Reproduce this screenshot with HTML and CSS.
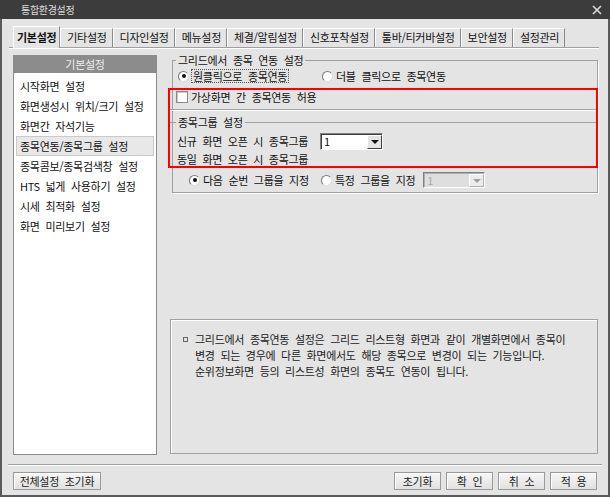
FILE: index.html
```html
<!DOCTYPE html>
<html lang="ko">
  <head>
    <meta charset="UTF-8" />
    <title>통합환경설정</title>
    <link rel="stylesheet" href="styles.css">
  </head>
  <body>
    <div class="window">
      <div class="titlebar">
        <span class="title">통합환경설정</span>
        <svg class="close" width="10" height="10" viewBox="0 0 10 10">
          <path d="M1 1 L9 9 M9 1 L1 9" stroke="#dcdcdc" stroke-width="1.6" />
        </svg>
      </div>

      <div class="tabs">
        <span class="tab active">기본설정</span>
        <span class="tab">기타설정</span>
        <span class="tab">디자인설정</span>
        <span class="tab">메뉴설정</span>
        <span class="tab">체결/알림설정</span>
        <span class="tab">신호포착설정</span>
        <span class="tab">툴바/티커바설정</span>
        <span class="tab">보안설정</span>
        <span class="tab">설정관리</span>
      </div>

      <div class="content">
        <div class="sidebar">
          <div class="side-head">기본설정</div>
          <ul class="side-list">
            <li>시작화면 설정</li>
            <li>화면생성시 위치/크기 설정</li>
            <li>화면간 자석기능</li>
            <li class="selected">종목연동/종목그룹 설정</li>
            <li>종목콤보/종목검색창 설정</li>
            <li>HTS 넓게 사용하기 설정</li>
            <li>시세 최적화 설정</li>
            <li>화면 미리보기 설정</li>
          </ul>
        </div>

        <div class="main">
          <fieldset class="group">
            <legend>그리드에서 종목 연동 설정</legend>
            <div class="row first-row">
              <label class="opt wide">
                <span class="radio checked"></span>
                <span class="focus">원클릭으로 종목연동</span>
              </label>
              <label class="opt">
                <span class="radio"></span>
                <span>더블 클릭으로 종목연동</span>
              </label>
            </div>

            <div class="highlight">
              <label class="row check-row">
                <span class="checkbox"></span>
                <span>가상화면 간 종목연동 허용</span>
              </label>
              <div class="divider"></div>
              <fieldset class="subgroup">
                <legend>종목그룹 설정</legend>
                <div class="field-row">
                  <span class="field-label">신규 화면 오픈 시 종목그룹</span>
                  <span class="combo">
                    <span class="combo-value">1</span>
                    <span class="combo-btn"></span>
                  </span>
                </div>
                <div class="field-row second">
                  <span class="field-label">동일 화면 오픈 시 종목그룹</span>
                </div>
              </fieldset>
            </div>

            <div class="row group-row">
              <label class="opt narrow">
                <span class="radio checked"></span>
                <span>다음 순번 그룹을 지정</span>
              </label>
              <label class="opt">
                <span class="radio"></span>
                <span>특정 그룹을 지정</span>
              </label>
              <span class="combo disabled">
                <span class="combo-value">1</span>
                <span class="combo-btn"></span>
              </span>
            </div>
          </fieldset>

          <div class="info">
            <span class="bullet"></span>
            <p>그리드에서 종목연동 설정은 그리드 리스트형 화면과 같이 개별화면에서 종목이<br>
              변경 되는 경우에 다른 화면에서도 해당 종목으로 변경이 되는 기능입니다.<br>
              순위정보화면 등의 리스트성 화면의 종목도 연동이 됩니다.</p>
          </div>
        </div>
      </div>

      <div class="footer-line"></div>
      <div class="buttons">
        <button class="btn reset-all">전체설정 초기화</button>
        <div class="btn-group">
          <button class="btn">초기화</button>
          <button class="btn">확 인</button>
          <button class="btn">취 소</button>
          <button class="btn">적 용</button>
        </div>
      </div>
    </div>
  </body>
</html>
```

FILE: styles.css
```css
* {
  box-sizing: border-box;
}
body {
  margin: 0;
  font-family: "Noto Sans CJK KR", "Liberation Sans", sans-serif;
  font-size: 11px;
  letter-spacing: -0.3px;
  word-spacing: 3px;
  color: #111;
}
.window {
  width: 610px;
  height: 497px;
  background: #e4e4e4;
  border: 2px solid #5a5a5a;
  border-top: none;
  display: flex;
  flex-direction: column;
}

/* title bar */
.titlebar {
  height: 19px;
  margin: 0 -2px;
  padding: 0 8px 0 21px;
  background: #3c3c3c;
  color: #dcdcdc;
  font-size: 10px;
  display: flex;
  align-items: center;
  justify-content: space-between;
}
.close {
  display: block;
}

/* tabs */
.tabs {
  display: flex;
  align-items: flex-end;
  height: 22px;
  margin: 7px 9px 0 7px;
  padding-left: 4px;
  border-bottom: 1px solid #a0a0a0;
  box-shadow: 0 1px 0 #fff;
}
.tab {
  height: 19px;
  padding: 0 5px 0 6px;
  line-height: 17px;
  border-top: 1px solid #fff;
  border-left: 1px solid #fff;
  border-right: 1px solid #8a8a8a;
  white-space: nowrap;
}
.tab.active {
  height: 22px;
  margin-bottom: -1px;
  padding: 0 3px;
  line-height: 20px;
  font-weight: bold;
  background: #e4e4e4;
  position: relative;
}

/* body */
.content {
  display: flex;
  gap: 13px;
  height: 402px;
  margin-top: 5px;
  padding: 0 10px 0 11px;
}
.sidebar {
  width: 144px;
  margin-top: 2px;
  background: #fff;
  border: 1px solid #8c8c8c;
}
.side-head {
  height: 17px;
  line-height: 17px;
  background: #8c8c8c;
  color: #eee;
  text-align: center;
}
.side-list {
  list-style: none;
  margin: 0;
  padding: 3px 0 0;
}
.side-list li {
  height: 20px;
  line-height: 20px;
  padding-left: 6px;
  white-space: nowrap;
}
.side-list li.selected {
  margin: 0 2px;
  padding-left: 3px;
  background: #e8e8e8;
  border: 1px solid #cacaca;
  line-height: 18px;
}

.main {
  flex: 1;
  display: flex;
  flex-direction: column;
}
.group {
  margin: 0 0 0 2px;
  padding: 1px 0 4px 0;
  min-width: 0;
  border: 1px solid #a0a0a0;
  box-shadow: 1px 1px 0 #fff;
}
.group > legend {
  margin-left: 3px;
  padding: 0 2px;
  line-height: 14px;
}
.row {
  display: flex;
  align-items: center;
  height: 16px;
}
.first-row {
  padding-left: 5px;
}
.opt {
  display: flex;
  flex: none;
  align-items: center;
  gap: 3px;
  white-space: nowrap;
}
.opt.wide {
  width: 144px;
}
.opt.narrow {
  width: 132px;
}
.focus {
  outline: 1px dotted #555;
  outline-offset: 0;
  padding: 0 1px;
  line-height: 12px;
}
.radio {
  flex: none;
  width: 11px;
  height: 11px;
  border-radius: 50%;
  background: #fff;
  border: 1px solid;
  border-color: #7a7a7a #dcdcdc #dcdcdc #7a7a7a;
  display: flex;
  align-items: center;
  justify-content: center;
}
.radio.checked::after {
  content: "";
  width: 4px;
  height: 4px;
  border-radius: 50%;
  background: #111;
}
.checkbox {
  width: 12px;
  height: 12px;
  background: #fff;
  border: 1px solid #8a8a8a;
  box-shadow: inset 1px 1px 0 #c8c8c8;
}

/* red annotation */
.highlight {
  margin: 4px -1px 0 -5px;
  border: 2px solid #ff0000;
}
.check-row {
  height: 14px;
  padding-left: 6px;
  gap: 3px;
}
.divider {
  height: 2px;
  margin-top: 5px;
  border-top: 1px solid #a0a0a0;
  border-bottom: 1px solid #fff;
}
.subgroup {
  margin: 4px 0 0;
  padding: 0;
  min-width: 0;
  border: none;
  border-top: 1px solid #a0a0a0;
}
.subgroup > legend {
  margin-left: 6px;
  padding: 0 2px;
  line-height: 14px;
}
.field-row {
  display: flex;
  align-items: center;
  height: 18px;
  margin-top: 3px;
  padding-left: 7px;
}
.field-row.second {
  height: 14px;
  margin-top: 2px;
}
.field-label {
  width: 143px;
  white-space: nowrap;
}
.combo {
  display: flex;
  flex: none;
  width: 63px;
  height: 17px;
  background: #fff;
  border: 1px solid;
  border-color: #808080 #fff #fff #808080;
  box-shadow: inset 1px 1px 0 #404040;
}
.combo-value {
  flex: 1;
  padding: 1px 0 0 3px;
  line-height: 13px;
}
.combo-btn {
  width: 15px;
  margin: 1px 0 0;
  background: #e4e4e4;
  border: 1px solid;
  border-color: #fff #404040 #404040 #fff;
  display: flex;
  align-items: center;
  justify-content: center;
}
.combo-btn::after {
  content: "";
  border-left: 4px solid transparent;
  border-right: 4px solid transparent;
  border-top: 4px solid #111;
}
.combo.disabled {
  width: 62px;
  height: 16px;
  margin-left: 8px;
  background: #dedede;
  color: #aaa;
  box-shadow: inset 1px 1px 0 #b0b0b0;
}
.combo.disabled .combo-btn {
  background: #ececec;
  border-color: #fff #b0b0b0 #b0b0b0 #fff;
}
.combo.disabled .combo-btn::after {
  border-top-color: #a0a0a0;
}
.group-row {
  margin-top: 4px;
  padding-left: 16px;
}

/* info box */
.info {
  display: flex;
  height: 135px;
  margin: auto 0 1px;
  padding: 11px 0 0 12px;
  border: 1px solid #a0a0a0;
  box-shadow: inset 1px 1px 0 #fff;
  line-height: 16px;
  color: #222;
}
.bullet {
  flex: none;
  width: 5px;
  height: 5px;
  margin-top: 6px;
  border: 1px solid #666;
}
.info p {
  margin: 0 0 0 7px;
  white-space: nowrap;
}

/* footer */
.footer-line {
  height: 2px;
  margin: 9px 6px 0;
  border-top: 1px solid #a0a0a0;
  border-bottom: 1px solid #fff;
}
.buttons {
  display: flex;
  height: 18px;
  margin-top: 6px;
  padding: 0 11px;
}
.btn-group {
  display: flex;
  gap: 5px;
  margin-left: auto;
}
.btn {
  height: 18px;
  width: 47px;
  padding: 0;
  font: inherit;
  letter-spacing: inherit;
  word-spacing: inherit;
  line-height: 16px;
  color: #222;
  background: linear-gradient(#f7f7f7, #e0e0e0);
  border: 1px solid #9a9a9a;
  box-shadow: inset 1px 1px 0 #fff;
}
.btn.reset-all {
  width: 88px;
}
```
